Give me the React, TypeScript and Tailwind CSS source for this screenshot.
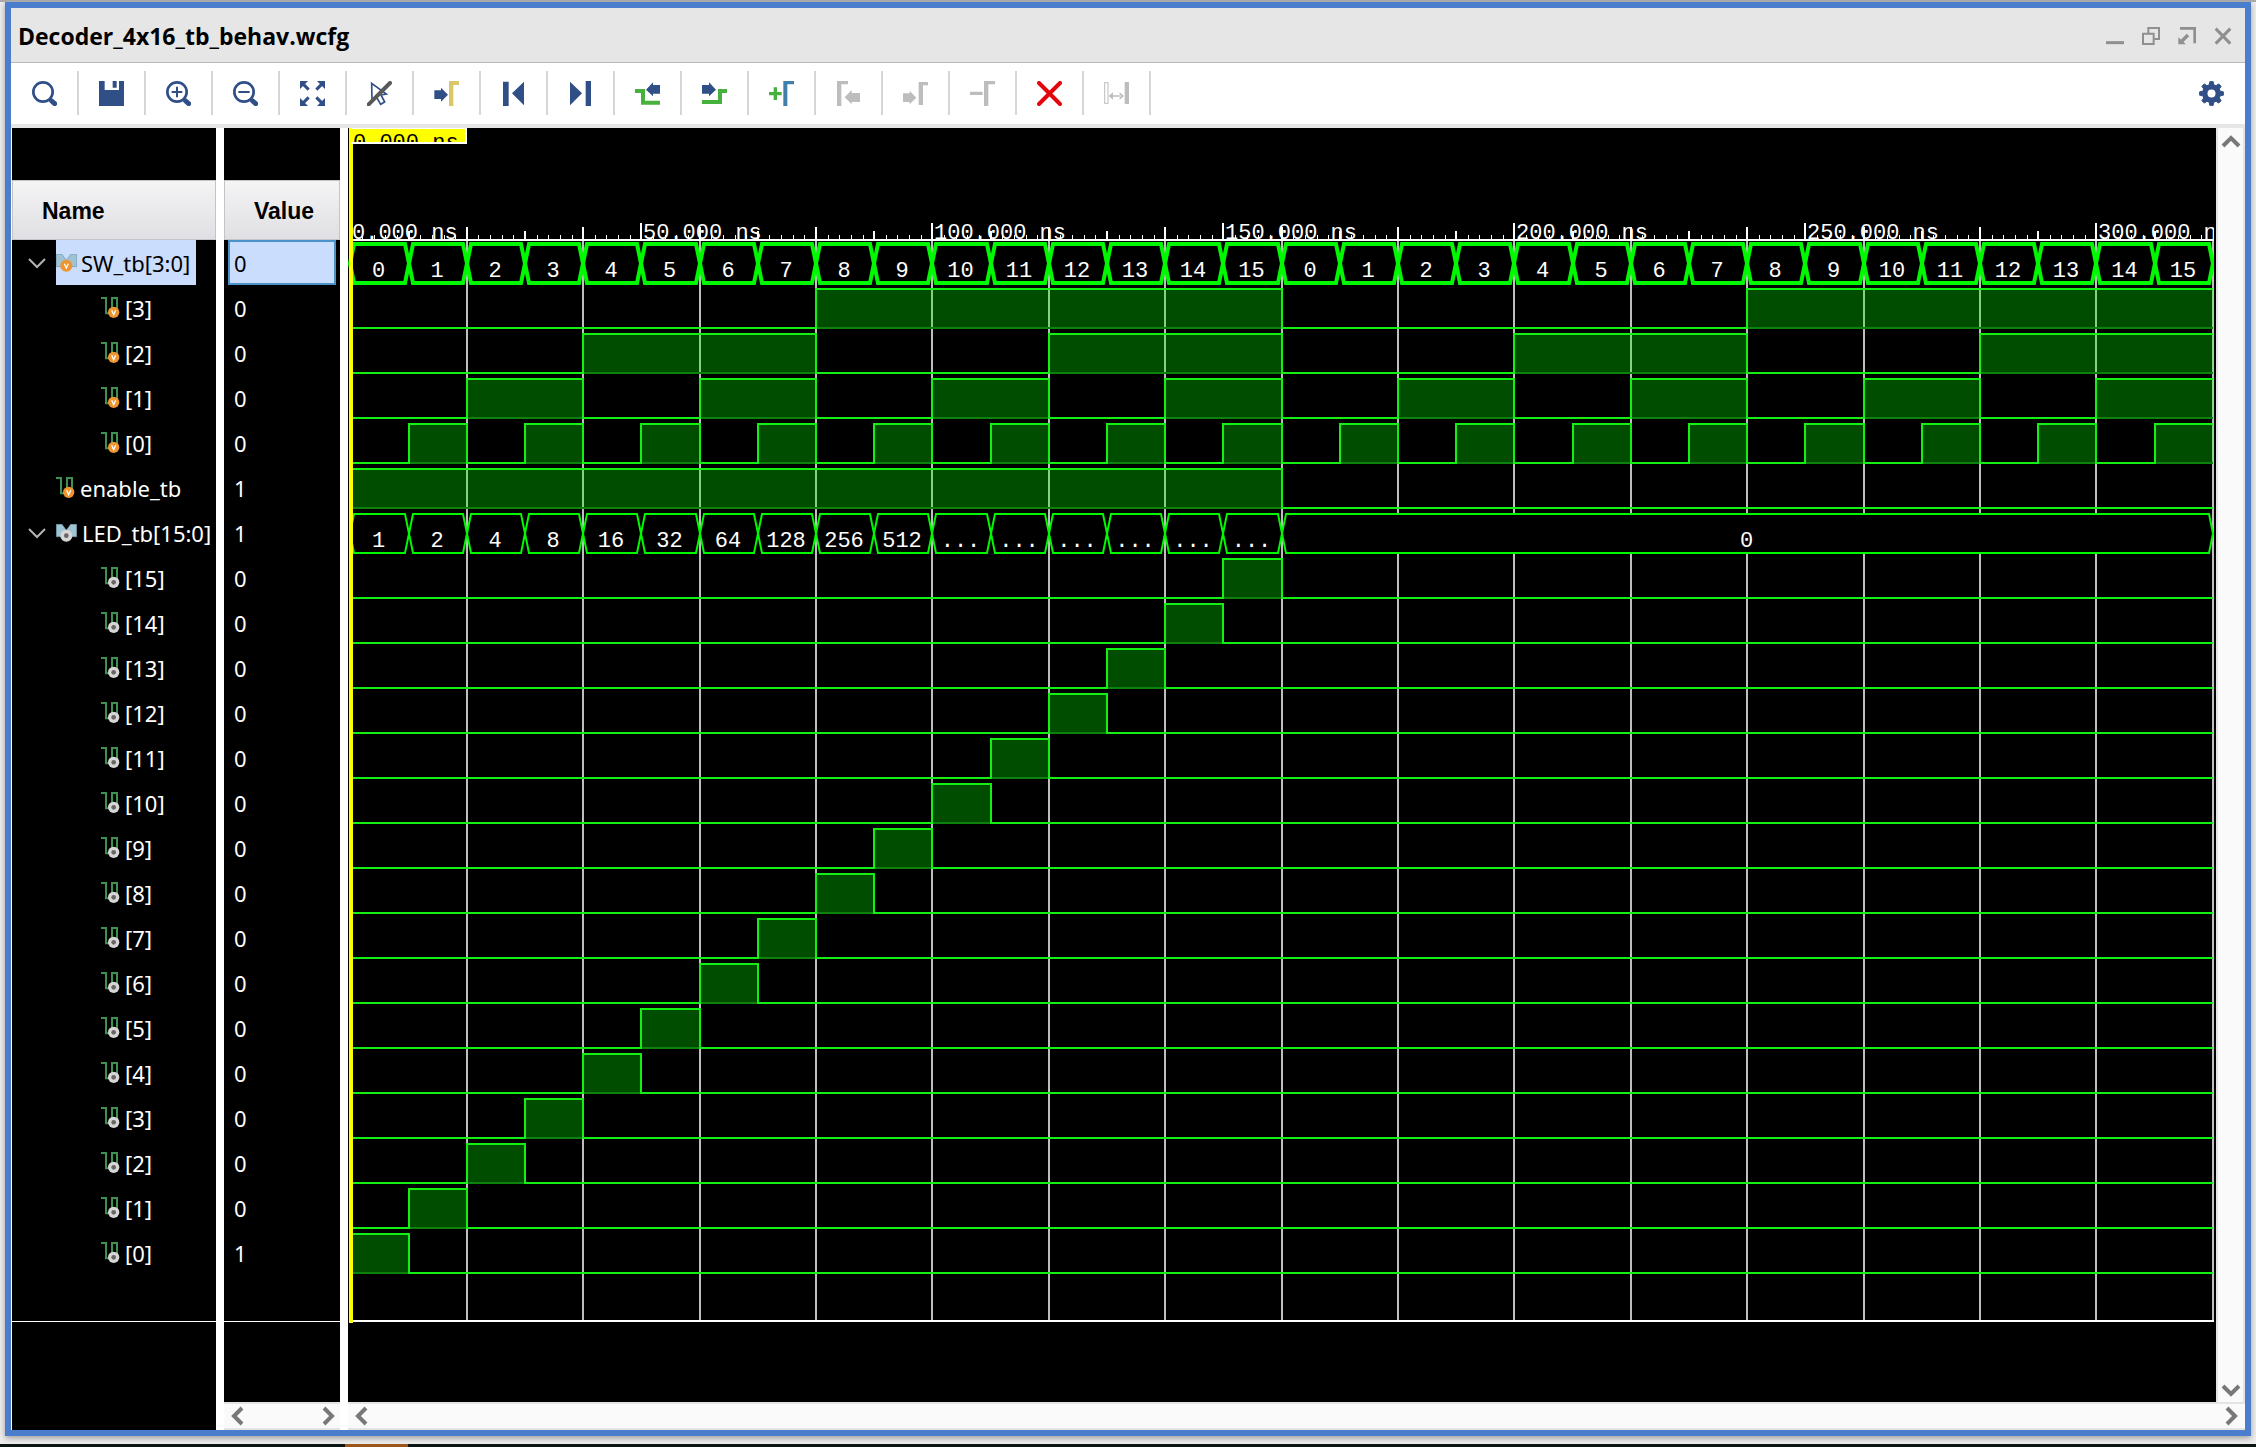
import React from "react";

type Kind = "inputBus" | "outputBus" | "inputBit" | "outputBit";
type Span = { from: number; to: number; label: string };
type Signal = {
  name: string;
  value: string;
  kind: Kind;
  nested?: boolean;
  selected?: boolean;
  bus?: Span[];
  high?: [number, number][];
};

const END = 320;
const SCALE = 5.82;
const ORIGIN = 2.4;
const ROW = 45;
const TOP = 112;
const BOTTOM = 1193;
const x = (t: number) => Math.round(ORIGIN + t * SCALE);
const range = (n: number) => Array.from({ length: n }, (_, i) => i);

const bitSpans = (bit: number): [number, number][] => {
  const w = 10 * 2 ** bit;
  const spans: [number, number][] = [];
  for (let t = w; t < END; t += 2 * w) spans.push([t, t + w]);
  return spans;
};

const signals: Signal[] = [
  {
    name: "SW_tb[3:0]",
    value: "0",
    kind: "inputBus",
    selected: true,
    bus: range(32).map((i) => ({ from: i * 10, to: i * 10 + 10, label: String(i % 16) })),
  },
  ...[3, 2, 1, 0].map(
    (b): Signal => ({ name: `[${b}]`, value: "0", kind: "inputBit", nested: true, high: bitSpans(b) }),
  ),
  { name: "enable_tb", value: "1", kind: "inputBit", high: [[0, 160]] },
  {
    name: "LED_tb[15:0]",
    value: "1",
    kind: "outputBus",
    bus: [
      ...range(16).map((i) => ({ from: i * 10, to: i * 10 + 10, label: i < 10 ? String(2 ** i) : "..." })),
      { from: 160, to: 320, label: "0" },
    ],
  },
  ...range(16).map((i): Signal => {
    const b = 15 - i;
    return {
      name: `[${b}]`,
      value: b === 0 ? "1" : "0",
      kind: "outputBit",
      nested: true,
      high: [[b * 10, b * 10 + 10]],
    };
  }),
];

const NAVY = "#314f87";
const GREEN = "#46b13c";
const DIM = "#bdbdbd";

const Lens = ({ children }: { children?: React.ReactNode }) => (
  <>
    <circle cx="33" cy="33" r="29" fill="none" stroke={NAVY} strokeWidth="8" />
    <path d="M59 60L68 68" stroke={NAVY} strokeWidth="15" strokeLinecap="round" />
    {children}
  </>
);

const tools: { label: string; disabled?: boolean; art: React.ReactNode }[] = [
  { label: "Search", art: <Lens /> },
  {
    label: "Save",
    art: <path d="M0 0H17V27H60V0H75V75H0ZM41 0H53V20H41Z" fill={NAVY} />,
  },
  {
    label: "Zoom in",
    art: (
      <Lens>
        <path d="M17 33H49M33 17V49" stroke={NAVY} strokeWidth="6" />
      </Lens>
    ),
  },
  {
    label: "Zoom out",
    art: (
      <Lens>
        <path d="M16 33H50" stroke={NAVY} strokeWidth="6" />
      </Lens>
    ),
  },
  {
    label: "Zoom fit",
    art: (
      <>
        <path
          d="M0 0H24L0 24ZM75 0H51L75 24ZM0 75H24L0 51ZM75 75H51L75 51Z"
          fill={NAVY}
        />
        <path d="M8 8L26 26M67 8L49 26M8 67L26 49M67 67L49 49" stroke={NAVY} strokeWidth="9" />
      </>
    ),
  },
  {
    label: "Select mode",
    art: (
      <>
        <path
          d="M14 7L15 57L27 46L41 70L53 63L42 42L58 39Z"
          fill="#fff"
          stroke={NAVY}
          strokeWidth="5"
        />
        <path d="M69 6L5 70" stroke="#595959" strokeWidth="12" strokeLinecap="round" />
      </>
    ),
  },
  {
    label: "Go to cursor",
    art: (
      <>
        <path d="M1 28H21V20L42 41L21 62V54H1Z" fill={NAVY} />
        <path d="M45 0H75V12H58V75H45Z" fill="#d9c86a" />
      </>
    ),
  },
  { label: "Go to start", art: <path d="M6 2H23V75H6ZM33 37L69 2V73Z" fill={NAVY} /> },
  { label: "Go to end", art: <path d="M53 0H69V75H53ZM42 37L6 2V73Z" fill={NAVY} /> },
  {
    label: "Previous transition",
    art: (
      <>
        <path d="M0 30H24V65H75" fill="none" stroke={GREEN} strokeWidth="12" />
        <path d="M33 26L54 4V12H75V38H54V46Z" fill={NAVY} />
      </>
    ),
  },
  {
    label: "Next transition",
    art: (
      <>
        <path d="M0 63H54V30H75" fill="none" stroke={GREEN} strokeWidth="12" />
        <path d="M42 26L21 4V12H0V38H21V46Z" fill={NAVY} />
      </>
    ),
  },
  {
    label: "Add marker",
    art: (
      <>
        <path d="M0 38H38M19 19V57" stroke={GREEN} strokeWidth="10" />
        <path d="M43 0H75V10H55V75H43Z" fill="#3f7fa9" />
      </>
    ),
  },
  {
    label: "Previous marker",
    disabled: true,
    art: <path d="M3 0H36V10H16V75H3ZM26 49L47 27V36H72V63H47V70Z" fill={DIM} />,
  },
  {
    label: "Next marker",
    disabled: true,
    art: <path d="M47 3H75V13H60V72H47ZM40 50L20 29V37H0V63H20V70Z" fill={DIM} />,
  },
  { label: "Delete marker", disabled: true, art: <path d="M42 0H75V10H55V75H42ZM0 32H38V42H0Z" fill={DIM} /> },
  {
    label: "Delete",
    art: <path d="M6 6L69 69M69 6L6 69" stroke="#e3070d" strokeWidth="12" strokeLinecap="round" />,
  },
  {
    label: "Swap cursors",
    disabled: true,
    art: (
      <>
        <rect x="2" y="5" width="10" height="62" fill="none" stroke={DIM} strokeWidth="3" />
        <path d="M62 3H75V69H62ZM14 45L27 34V56ZM60 45L47 34V56ZM24 43H50V47H24Z" fill={DIM} />
      </>
    ),
  },
];

const windowButtons: { label: string; art: React.ReactNode }[] = [
  { label: "Minimize", art: <path d="M0 47H54" strokeWidth="9" /> },
  { label: "Restore", art: <path d="M3 20H35V51H3ZM19 20V3H51V36H35" strokeWidth="6" /> },
  {
    label: "Float",
    art: (
      <>
        <path d="M6 4H50V49" strokeWidth="8" />
        <path d="M30 24L12 42" strokeWidth="10" />
        <path d="M1 31V52H24Z" fill="#8f8f8f" stroke="none" />
      </>
    ),
  },
  { label: "Close", art: <path d="M5 5L49 50M49 5L5 50" strokeWidth="9" /> },
];

const gear = range(8)
  .map((i) => {
    const p = (r: number, d: number) => {
      const a = ((i * 45 + d) * Math.PI) / 180;
      return `${(37.5 + r * Math.cos(a)).toFixed(1)} ${(37.5 + r * Math.sin(a)).toFixed(1)}`;
    };
    return `${p(27, -15)}L${p(36, -8)}L${p(36, 8)}L${p(27, 15)}`;
  })
  .join("L");

function Badge({ cx, cy, r, input }: { cx: number; cy: number; r: number; input: boolean }) {
  return input ? (
    <>
      <circle cx={cx} cy={cy} r={r} fill="#ef952f" />
      <path
        d={`M${cx - 6} ${cy - 6}L${cx} ${cy + 7}L${cx + 6} ${cy - 6}`}
        fill="none"
        stroke="#fff"
        strokeWidth="4"
      />
    </>
  ) : (
    <>
      <circle cx={cx} cy={cy} r={r} fill="#d6d6d6" />
      <circle cx={cx} cy={cy} r="7" fill="#6b6464" />
    </>
  );
}

function SignalIcon({ kind }: { kind: Kind }) {
  const input = kind === "inputBus" || kind === "inputBit";
  if (kind === "inputBus" || kind === "outputBus") {
    return (
      <svg viewBox="0 0 63 54" className="h-[18px] w-[21px] shrink-0" aria-hidden="true">
        <path
          d="M1 1H18L31 19L44 1H62V38H1Z"
          fill="#9fc3d3"
          stroke="#6f97ab"
          strokeWidth="2"
        />
        <Badge cx={31} cy={35} r={18} input={input} />
      </svg>
    );
  }
  return (
    <svg viewBox="0 0 57 63" className="h-[21px] w-[19px] shrink-0" aria-hidden="true">
      <path d="M0 3H15V49H33V3H48V36" fill="none" stroke="#3f9152" strokeWidth="6" />
      <Badge cx={38} cy={46} r={17} input={input} />
    </svg>
  );
}

function Chevron({ dir, className }: { dir: "up" | "down" | "left" | "right"; className: string }) {
  const d = {
    up: "M2 12L10 4L18 12",
    down: "M2 4L10 12L18 4",
    left: "M12 2L4 10L12 18",
    right: "M4 2L12 10L4 18",
  }[dir];
  const box = dir === "up" || dir === "down" ? "0 0 20 16" : "0 0 16 20";
  return (
    <button type="button" aria-label={`Scroll ${dir}`} className={className}>
      <svg viewBox={box} className={dir === "up" || dir === "down" ? "h-4 w-5" : "h-5 w-4"} aria-hidden="true">
        <path d={d} fill="none" stroke="#787878" strokeWidth="4" />
      </svg>
    </button>
  );
}

function BusWave({ spans, y, thick }: { spans: Span[]; y: number; thick?: boolean }) {
  const top = y + 4;
  const low = y + 43;
  const mid = (top + low) / 2;
  return (
    <g>
      {spans.map((s) => {
        const a = x(s.from);
        const b = x(s.to);
        return (
          <g key={s.from}>
            <path
              d={`M${a} ${mid}L${a + 4} ${top}H${b - 4}L${b} ${mid}L${b - 4} ${low}H${a + 4}Z`}
              fill="#000"
              stroke="#00f800"
              strokeWidth={thick ? 4 : 2}
            />
            <text x={(a + b) / 2 - 1} y={y + 37} textAnchor="middle" fill="#fff">
              {s.label}
            </text>
          </g>
        );
      })}
    </g>
  );
}

function BitWave({ high, y }: { high: [number, number][]; y: number }) {
  const top = y + 4;
  const low = y + 43;
  let line = "";
  let t = 0;
  high.forEach(([a, b]) => {
    if (a > t) line += `M${x(t)} ${low}H${x(a)}`;
    line += a > 0 ? `M${x(a)} ${low + 1}V${top}` : `M${x(a)} ${top}`;
    line += `H${x(b)}`;
    if (b < END) line += `V${low + 1}`;
    t = b;
  });
  if (t < END) line += `M${x(t)} ${low}H${x(END)}`;
  return (
    <g>
      {high.map(([a, b]) => (
        <g key={a}>
          <rect x={x(a)} y={top} width={x(b) - x(a)} height={low - top} fill="#00ff00" fillOpacity="0.3" />
          <path d={`M${x(a)} ${low}H${x(b)}`} stroke="#0c820c" strokeWidth="2" />
        </g>
      ))}
      <path d={line} fill="none" stroke="#14f014" strokeWidth="2" />
    </g>
  );
}

function Waveform() {
  const end = x(END);
  return (
    <svg
      className="min-h-0 w-full flex-1 bg-black font-['Liberation_Mono',monospace] text-[22px]"
      role="img"
      aria-label="Simulation waveforms"
    >
      <defs>
        <clipPath id="plot">
          <rect x="0" y="0" width={end + 1} height="1300" />
        </clipPath>
        <clipPath id="marker">
          <rect x="3" y="0" width="115" height="14" />
        </clipPath>
      </defs>
      <g clipPath="url(#plot)">
        {range(16).map((i) => (
          <path key={i} d={`M${x((i + 1) * 20)} ${TOP}V${BOTTOM}`} stroke="#bebebe" strokeWidth="2" />
        ))}
        {range(160).map((i) => {
          const t = i * 2;
          const h = t % 50 === 0 ? 17 : t % 20 === 0 ? 13 : t % 10 === 0 ? 9 : 5;
          return (
            <path
              key={t}
              d={`M${x(t)} ${TOP}V${TOP - h}`}
              stroke="#fff"
              strokeWidth={t % 10 === 0 ? 2 : 1}
              shapeRendering="crispEdges"
            />
          );
        })}
        <path d={`M3 ${TOP}H${end + 1}`} stroke="#fff" strokeWidth="2" />
        {range(7).map((i) => (
          <text key={i} x={x(i * 50) + 2} y={TOP - 1} fill="#fff">
            {`${i * 50}.000 ns`}
          </text>
        ))}
        {signals.map((s, i) =>
          s.bus ? (
            <BusWave key={i} spans={s.bus} y={TOP + i * ROW} thick={s.selected} />
          ) : (
            <BitWave key={i} high={s.high ?? []} y={TOP + i * ROW} />
          ),
        )}
        <path d={`M3 ${BOTTOM}H${end + 1}`} stroke="#fff" strokeWidth="2" />
      </g>
      <rect x="1" y="0" width="4" height={BOTTOM + 2} fill="#ffff00" />
      <rect x="3" y="0" width="116" height="16" fill="#fff" />
      <rect x="3" y="1" width="114" height="13" fill="#ffff00" />
      <text x="5" y="21" fill="#000" clipPath="url(#marker)">
        0.000 ns
      </text>
    </svg>
  );
}

export default function App() {
  return (
    <div className="flex h-screen flex-col overflow-hidden border-t-2 border-[#a9a9a9] bg-[#ededed] font-['Noto_Sans',sans-serif] text-black">
      <main className="mx-[5px] mb-2 flex min-h-0 flex-1 flex-col border-6 border-[#4a7dcb] bg-white shadow-[0_2px_6px_rgba(0,0,0,0.35)]">
        <header className="flex h-[55px] shrink-0 items-center justify-between border-b border-[#b8b8b8] bg-[#e6e6e6] pt-0.5 pr-[13px] pl-[7px]">
          <h1 className="font-['Open_Sans',sans-serif] text-[23px] font-bold">Decoder_4x16_tb_behav.wcfg</h1>
          <div className="flex gap-[18px]">
            {windowButtons.map((b) => (
              <button key={b.label} type="button" aria-label={b.label} className="size-[18px]">
                <svg viewBox="0 0 54 54" fill="none" stroke="#8f8f8f" className="size-[18px]" aria-hidden="true">
                  {b.art}
                </svg>
              </button>
            ))}
          </div>
        </header>

        <div className="flex h-[65px] shrink-0 items-start border-b-4 border-[#e6e6e6] bg-white pt-2 pl-px" role="toolbar">
          {tools.map((t) => (
            <button
              key={t.label}
              type="button"
              aria-label={t.label}
              disabled={t.disabled}
              className="flex h-11 w-[67px] shrink-0 justify-center border-r-2 border-[#d6d6d6] pt-2.5"
            >
              <svg viewBox="0 0 75 75" className="size-[25px]" aria-hidden="true">
                {t.art}
              </svg>
            </button>
          ))}
          <button type="button" aria-label="Settings" className="mr-[21px] ml-auto pt-2.5">
            <svg viewBox="0 0 75 75" className="size-[25px]" aria-hidden="true">
              <path d={`M${gear}Z`} fill={NAVY} stroke={NAVY} strokeWidth="3" strokeLinejoin="round" />
              <circle cx="37.5" cy="37.5" r="12" fill="#fff" />
            </svg>
          </button>
        </div>

        <div className="flex min-h-0 flex-1 pl-px text-[22px]">
          <section className="mr-2 flex w-[204px] shrink-0 flex-col bg-black pt-[52px]" aria-label="Signal names">
            <h2 className="flex h-[60px] shrink-0 items-center border border-[#c4c4c4] bg-linear-to-b from-[#f4f4f5] to-[#e0e0e4] pt-0.5 pl-[29px] font-['Liberation_Sans',sans-serif] text-[23px] font-bold">
              Name
            </h2>
            <ul className="pb-[46px] text-white">
              {signals.map((s, i) => (
                <li key={i} className={s.nested ? "flex h-[45px] items-center pl-[89px]" : "flex h-[45px] items-center pl-4"}>
                  {s.bus ? (
                    <button type="button" aria-label={`Collapse ${s.name}`} className="mr-2.5 shrink-0">
                      <svg viewBox="0 0 18 12" className="h-3 w-[18px]" aria-hidden="true">
                        <path d="M1 2L9 10L17 2" fill="none" stroke="#b4b4b4" strokeWidth="2" />
                      </svg>
                    </button>
                  ) : (
                    !s.nested && <span className="w-7 shrink-0" />
                  )}
                  <span
                    className={
                      s.selected
                        ? "flex h-full items-center gap-1 bg-[#cbddfc] pr-1.5 text-black"
                        : "flex h-full items-center gap-[5px]"
                    }
                  >
                    <SignalIcon kind={s.kind} />
                    <span className="pt-px whitespace-nowrap">{s.name}</span>
                  </span>
                </li>
              ))}
            </ul>
            <div className="flex-1 border-t border-white" />
          </section>

          <section className="mr-2 flex w-[116px] shrink-0 flex-col bg-black pt-[52px]" aria-label="Signal values">
            <h2 className="flex h-[60px] shrink-0 items-center border border-[#c4c4c4] bg-linear-to-b from-[#f4f4f5] to-[#e0e0e4] pt-0.5 pl-[29px] font-['Liberation_Sans',sans-serif] text-[23px] font-bold">
              Value
            </h2>
            <ul className="px-1 pb-[46px] text-white">
              {signals.map((s, i) => (
                <li
                  key={i}
                  className={
                    s.selected
                      ? "flex h-[45px] items-center border-2 border-[#4a92c8] bg-[#cbddfc] pt-px pl-1 text-black"
                      : "flex h-[45px] items-center pt-px pl-1.5"
                  }
                >
                  {s.value}
                </li>
              ))}
            </ul>
            <div className="flex-1 border-t border-white" />
            <div className="flex h-7 shrink-0 items-center justify-between border-y-2 border-[#e4e4e4] bg-[#fafafa] pr-1 pl-1.5">
              <Chevron dir="left" className="block" />
              <Chevron dir="right" className="block" />
            </div>
          </section>

          <section className="flex min-w-0 flex-1 flex-col" aria-label="Waveform">
            <div className="flex min-h-0 flex-1">
              <div className="flex min-w-0 flex-1 flex-col">
                <Waveform />
              </div>
              <div className="flex w-[29px] shrink-0 flex-col items-center justify-between border-x-2 border-[#e4e4e4] bg-[#fafafa] pt-1.5 pb-1">
                <Chevron dir="up" className="block" />
                <Chevron dir="down" className="block" />
              </div>
            </div>
            <div className="flex h-7 shrink-0 items-center justify-between border-y-2 border-[#e4e4e4] bg-[#fafafa] px-1.5">
              <Chevron dir="left" className="block" />
              <Chevron dir="right" className="block" />
            </div>
          </section>
        </div>
      </main>
      <footer className="flex h-[3px] shrink-0 bg-[#0d1512]">
        <div className="ml-[345px] w-[63px] bg-[#9c561c]" />
      </footer>
    </div>
  );
}
